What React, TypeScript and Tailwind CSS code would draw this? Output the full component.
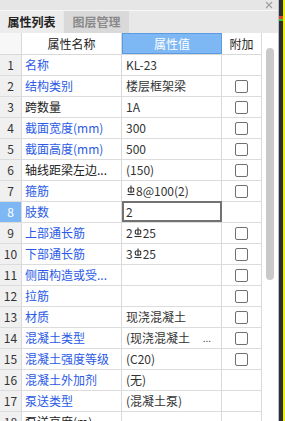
import React from "react";

type Row = {
  no: number;
  name: string;
  blue: boolean;
  value: React.ReactNode;
  check: boolean;
  more?: boolean;
};

// HRB400 rebar mark, drawn since no installed font has the glyph
function Rebar() {
  return (
    <svg width="8" height="12" viewBox="0 0 8 12" className="inline-block align-[1px] mx-[1px]" aria-label="C">
      <path d="M4 0.5V8" stroke="#333" strokeWidth="1.1" fill="none" />
      <rect x="1.3" y="3" width="5.4" height="4" rx="1" stroke="#333" strokeWidth="1.1" fill="none" />
      <path d="M0.5 9.5H7.5" stroke="#333" strokeWidth="1.1" fill="none" />
    </svg>
  );
}

const rows: Row[] = [
  { no: 1, name: "名称", blue: true, value: "KL-23", check: false },
  { no: 2, name: "结构类别", blue: true, value: "楼层框架梁", check: true },
  { no: 3, name: "跨数量", blue: false, value: "1A", check: true },
  { no: 4, name: "截面宽度(mm)", blue: true, value: "300", check: true },
  { no: 5, name: "截面高度(mm)", blue: true, value: "500", check: true },
  { no: 6, name: "轴线距梁左边...", blue: false, value: "(150)", check: true },
  { no: 7, name: "箍筋", blue: true, value: <><Rebar />8@100(2)</>, check: true },
  { no: 8, name: "肢数", blue: true, value: "2", check: false },
  { no: 9, name: "上部通长筋", blue: true, value: <>2<Rebar />25</>, check: true },
  { no: 10, name: "下部通长筋", blue: true, value: <>3<Rebar />25</>, check: true },
  { no: 11, name: "侧面构造或受...", blue: true, value: "", check: true },
  { no: 12, name: "拉筋", blue: true, value: "", check: true },
  { no: 13, name: "材质", blue: true, value: "现浇混凝土", check: true },
  { no: 14, name: "混凝土类型", blue: true, value: "(现浇混凝土", check: true, more: true },
  { no: 15, name: "混凝土强度等级", blue: true, value: "(C20)", check: true },
  { no: 16, name: "混凝土外加剂", blue: true, value: "(无)", check: false },
  { no: 17, name: "泵送类型", blue: true, value: "(混凝土泵)", check: false },
  { no: 18, name: "泵送高度(m)", blue: false, value: "", check: false },
];

const font = "font-['Noto_Sans_CJK_SC','Noto_Sans',sans-serif]";

export default function App() {
  return (
    <div className={`w-[285px] h-[421px] flex overflow-hidden bg-[#f0f0f0] text-[12px] leading-none ${font}`}>
      {/* panel */}
      <div className="w-[279px] flex flex-col border-r border-[#bdbdbd]">
        {/* title strip */}
        <div className="h-[11px] bg-[#e6e6e6] border-b border-[#f7f7f7] flex justify-end items-center pr-[5px]">
          <svg width="8" height="8" viewBox="0 0 8 8">
            <path d="M1 1L7 7M7 1L1 7" stroke="#a0a0a0" strokeWidth="1.2" />
          </svg>
        </div>

        {/* tabs */}
        <div className="h-[22px] bg-[#e8e8e8] flex items-stretch">
          <div className="w-[63px] flex items-center justify-center font-bold text-[#222] bg-[#ececec]">
            属性列表
          </div>
          <div className="ml-[1px] w-[65px] flex items-center justify-center font-bold text-[#8a8a8a] bg-[#d9d9d9]">
            图层管理
          </div>
        </div>

        {/* table + scrollbar */}
        <div className="flex-1 flex bg-white overflow-hidden">
          <div className="w-[262px] flex flex-col">
            {/* header */}
            <div className="h-[22px] flex shrink-0 border-b border-[#d9d9d9]">
              <div className="w-[22px] bg-[#f7f7f7] border-r border-[#d9d9d9]" />
              <div className="w-[100px] flex items-center justify-center text-[#222] border-r border-[#d9d9d9]">
                属性名称
              </div>
              <div className="w-[100px] flex items-center justify-center text-white bg-[#7db7f4] border border-[#5d9be0]">
                属性值
              </div>
              <div className="w-[40px] flex items-center justify-center text-[#222] border-r border-[#d9d9d9]">
                附加
              </div>
            </div>

            {rows.map((r) => {
              const sel = r.no === 8;
              return (
                <div key={r.no} className="h-[21px] flex shrink-0 border-b border-[#dcdcdc]">
                  <div
                    className={`w-[22px] flex items-center justify-center border-r border-[#d9d9d9] ${
                      sel ? "bg-[#7db7f4] text-white" : "bg-[#f0f0f0] text-[#333]"
                    }`}
                  >
                    {r.no}
                  </div>
                  <div
                    className={`w-[100px] flex items-center pl-[3px] whitespace-nowrap overflow-hidden border-r border-[#d9d9d9] ${
                      r.blue ? "text-[#2a5ae6]" : "text-[#222]"
                    }`}
                  >
                    {r.name}
                  </div>
                  <div
                    className={`w-[100px] flex items-center whitespace-nowrap overflow-hidden text-[#333] ${
                      sel ? "border-2 border-[#727272] pl-[2px] -mt-[1px] h-[21px]" : "pl-[4px] border-r border-[#d9d9d9]"
                    }`}
                  >
                    {r.value}
                    {r.more && <span className="ml-auto mr-[10px] text-[10px] text-[#444]">...</span>}
                  </div>
                  <div className="w-[40px] flex items-center justify-center border-r border-[#d9d9d9]">
                    {r.check && (
                      <span className="w-[13px] h-[13px] rounded-[2px] border border-[#707070] bg-white" />
                    )}
                  </div>
                </div>
              );
            })}
          </div>

          {/* scrollbar */}
          <div className="w-[16px] flex justify-center pt-[15px] bg-white">
            <div className="w-[8px] h-[232px] rounded-full bg-[#c9c9c9]" />
          </div>
        </div>
      </div>

      {/* neighbouring canvas edge */}
      <div className="w-[4px] bg-[#2b2e33] flex flex-col">
        <div className="h-[16px]" />
        <div className="h-[3px] bg-[#d84040]" />
        <div className="h-[2px] bg-[#3fbf3f]" />
      </div>
      <div className="w-[2px] bg-[#f2f200]" />
    </div>
  );
}
